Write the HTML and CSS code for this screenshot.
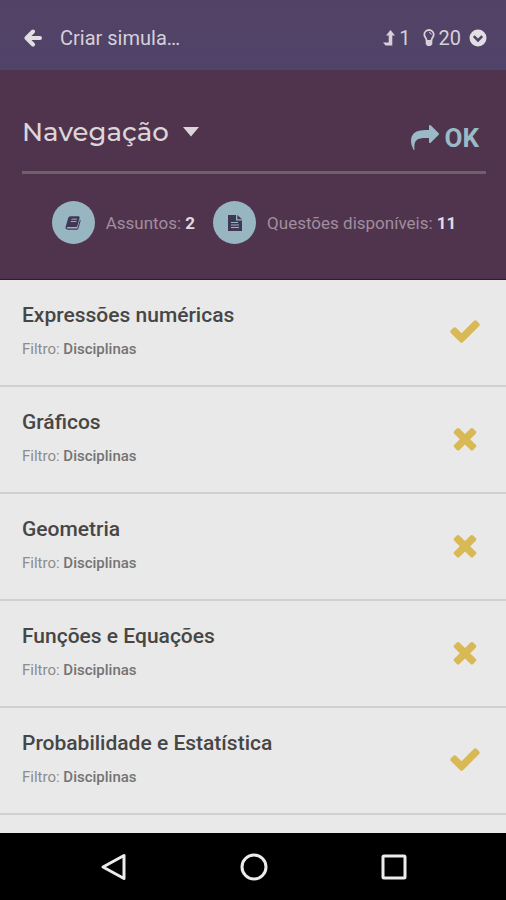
FILE: index.html
```html
<!DOCTYPE html>
<html lang="pt-BR">
<head>
<meta charset="utf-8">
<meta name="viewport" content="width=device-width, initial-scale=1">
<title>Criar simulado</title>
<link rel="stylesheet" href="styles.css">
</head>
<body>
<svg class="sprite" aria-hidden="true">
  <symbol id="check" viewBox="0 0 1792 1792"><path d="M1671 566q0 40-28 68l-724 724-136 136q-28 28-68 28t-68-28l-136-136-362-362q-28-28-28-68t28-68l136-136q28-28 68-28t68 28l294 295 656-657q28-28 68-28t68 28l136 136q28 28 28 68z"/></symbol>
  <symbol id="times" viewBox="0 0 1792 1792"><path d="M1490 1322q0 40-28 68l-136 136q-28 28-68 28t-68-28l-294-294-294 294q-28 28-68 28t-68-28l-136-136q-28-28-28-68t28-68l294-294-294-294q-28-28-28-68t28-68l136-136q28-28 68-28t68 28l294 294 294-294q28-28 68-28t68 28l136 136q28 28 28 68t-28 68l-294 294 294 294q28 28 28 68z"/></symbol>
</svg>

<header class="topbar">
  <button class="back" type="button" aria-label="Voltar">
    <svg viewBox="0 0 18 18" width="18" height="18"><path d="M9 2.500 2.500 9 9 15.500M3 9H16" fill="none" stroke="currentColor" stroke-width="4" stroke-linecap="round" stroke-linejoin="round"/></svg>
  </button>
  <h1 class="title">Criar simula…</h1>
  <div class="counters">
    <span class="counter">
      <svg viewBox="0 0 12 16" width="12" height="16"><path d="M7.500 0 12 5.500H9.300V15.500H2.600L0 12.500H5.700V5.500H3z" fill="currentColor"/></svg>1
    </span>
    <span class="counter">
      <svg viewBox="0 0 12 18" width="12" height="18"><path d="M3.600 11.500C3.600 9 1.300 8.500 1.300 5.500A4.700 4.500 0 0 1 10.700 5.500C10.700 8.500 8.400 9 8.400 11.500" fill="none" stroke="currentColor" stroke-width="1.800"/><path d="M6 3.500q2 0 2.300 2" fill="none" stroke="currentColor" stroke-width="1"/><path d="M2.700 11h6.600v4.200L7.500 17h-3l-1.800-1.800z" fill="currentColor"/></svg>20
    </span>
    <button class="more" type="button" aria-label="Mais">
      <svg viewBox="0 0 18 18" width="18" height="18"><circle cx="9" cy="9" r="8.500" fill="currentColor"/><path d="M4.800 7.200 9 11.400l4.200-4.200" fill="none" stroke="#514168" stroke-width="2.600"/></svg>
    </button>
  </div>
</header>

<section class="panel">
  <div class="panel-head">
    <button class="menu" type="button">Navegação
      <svg viewBox="0 0 16 10" width="16" height="10"><path d="M0 0h16L8 9.500z" fill="currentColor"/></svg>
    </button>
    <button class="ok" type="button">
      <svg viewBox="0 0 1792 1792" width="28" height="28"><path fill="currentColor" d="M1792 640q0 26-19 45l-512 512q-19 19-45 19t-45-19-19-45v-256h-224q-98 0-175.500 6t-154 21.500-133 42.500-105.500 69.500-80 101-48.500 138.500-17.500 181q0 55 5 123 0 6 2.500 23.500t2.500 26.500q0 15-8.500 25t-23.500 10q-16 0-28-17-7-9-13-22t-13.500-30-10.500-24q-127-285-127-451 0-199 53-333 162-403 875-403h224v-256q0-26 19-45t45-19 45 19l512 512q19 19 19 45z"/></svg>OK
    </button>
  </div>
  <div class="stats">
    <div class="stat">
      <span class="badge"><svg viewBox="0 0 18 18" width="16" height="16"><path d="M6 1.500H15.500q1.200.2.900 1.500L14 12.500q-.3 1-1.500 1H3q-1 0-1.200.8.200.9 1.400.9H14L16.800 5q1 .6.700 1.700L15 15.500q-.4 1.200-1.700 1.200H3Q.6 16.500.5 14.200L3.600 3.300Q4.300 1.500 6 1.500z" fill="currentColor"/><path d="M7.200 4.700h6.300M6.500 7.300h6.300" stroke="#98b5c2" stroke-width="1.100"/></svg></span>
      <span>Assuntos: <strong>2</strong></span>
    </div>
    <div class="stat">
      <span class="badge"><svg viewBox="0 0 16 18" width="16" height="18"><path d="M1 1h8v5.500h6V17H1z" fill="currentColor"/><path d="M10.300 1 15 5.300h-4.700z" fill="currentColor"/><path d="M4 8.500h7M4 11h8M4 13.500h8" stroke="#98b5c2" stroke-width="1.100"/></svg></span>
      <span>Questões disponíveis: <strong>11</strong></span>
    </div>
  </div>
</section>

<main class="list-area">
  <ul class="list">
    <li><button class="row" type="button" aria-pressed="true"><span class="text"><span class="name">Expressões numéricas</span><span class="filter">Filtro: <strong>Disciplinas</strong></span></span><svg class="mark"><use href="#check"/></svg></button></li>
    <li><button class="row" type="button" aria-pressed="false"><span class="text"><span class="name">Gráficos</span><span class="filter">Filtro: <strong>Disciplinas</strong></span></span><svg class="mark"><use href="#times"/></svg></button></li>
    <li><button class="row" type="button" aria-pressed="false"><span class="text"><span class="name">Geometria</span><span class="filter">Filtro: <strong>Disciplinas</strong></span></span><svg class="mark"><use href="#times"/></svg></button></li>
    <li><button class="row" type="button" aria-pressed="false"><span class="text"><span class="name">Funções e Equações</span><span class="filter">Filtro: <strong>Disciplinas</strong></span></span><svg class="mark"><use href="#times"/></svg></button></li>
    <li><button class="row" type="button" aria-pressed="true"><span class="text"><span class="name">Probabilidade e Estatística</span><span class="filter">Filtro: <strong>Disciplinas</strong></span></span><svg class="mark"><use href="#check"/></svg></button></li>
  </ul>
</main>

<nav class="system">
  <button type="button" aria-label="Voltar"><svg viewBox="0 0 28 28" width="28" height="28"><path d="M24 2.500v23L3 14z"/></svg></button>
  <button type="button" aria-label="Início"><svg viewBox="0 0 28 28" width="28" height="28"><circle cx="14" cy="14" r="12"/></svg></button>
  <button type="button" aria-label="Recentes"><svg viewBox="0 0 28 28" width="28" height="28"><rect x="3" y="3" width="22" height="22" rx="1"/></svg></button>
</nav>
</body>
</html>
```
FILE: styles.css
```css
* {
  box-sizing: border-box;
}

body {
  margin: 0;
  min-height: 100vh;
  display: flex;
  flex-direction: column;
  background: #e9e9e9;
  font-family: Roboto, "Liberation Sans", sans-serif;
}

button {
  padding: 0;
  border: 0;
  background: none;
  color: inherit;
  font: inherit;
  cursor: pointer;
}

svg {
  display: block;
  flex: none;
}

.sprite {
  position: absolute;
  width: 0;
  height: 0;
}

.topbar {
  display: flex;
  align-items: center;
  height: 70px;
  padding: 5px 19px 0 24px;
  background: linear-gradient(#534265, #504369);
  color: #d6d0d9;
  font-size: 20px;
}

.title {
  flex: 1;
  margin: 0 0 0 18px;
  font-size: 20px;
  font-weight: 400;
}

.back,
.more {
  color: #e2dfe2;
}

.counters,
.counter {
  display: flex;
  align-items: center;
}

.counters {
  gap: 8px;
}

.counter {
  gap: 4px;
}

.counter + .counter {
  margin-left: 4px;
}

.panel {
  height: 210px;
  padding: 0 20px 0 22px;
  background: #50344d;
  border-bottom: 1px solid #3b1240;
}

.panel-head {
  display: flex;
  align-items: center;
  justify-content: space-between;
  height: 104px;
  padding: 22px 7px 0 0;
  border-bottom: 3px solid #706169;
}

.menu {
  display: flex;
  align-items: center;
  gap: 14px;
  color: #dcd5da;
  font-family: Montserrat, Inter, sans-serif;
  font-size: 26px;
  font-weight: 500;
}

.ok {
  display: flex;
  align-items: center;
  gap: 6px;
  padding-top: 12px;
  color: #9bbac7;
  font-size: 26px;
  font-weight: 700;
}

.stats {
  display: flex;
  justify-content: center;
  gap: 18px;
  padding-top: 27px;
  color: #a08e9e;
  font-size: 17px;
  white-space: nowrap;
}

.stats strong {
  color: #e2dae0;
}

.stat {
  display: flex;
  align-items: center;
  gap: 11px;
}

.badge {
  display: grid;
  place-items: center;
  width: 43px;
  height: 43px;
  border-radius: 50%;
  background: #98b5c2;
  color: #403755;
}

.list-area {
  flex: 1;
}

.list {
  margin: 0;
  padding: 0;
  list-style: none;
}

.row {
  display: flex;
  align-items: center;
  justify-content: space-between;
  width: 100%;
  height: 107px;
  padding: 0 24px 3px 22px;
  border-bottom: 2px solid #d0d0d0;
  text-align: left;
}

.text {
  display: flex;
  flex-direction: column;
  gap: 12px;
}

.name {
  color: #464646;
  font-size: 21px;
  font-weight: 500;
  line-height: 24px;
}

.filter {
  color: #8c8c8c;
  font-size: 15px;
  line-height: 20px;
}

.filter strong {
  color: #747474;
  font-weight: 500;
}

.mark {
  width: 34px;
  height: 34px;
  fill: #d9b856;
}

.system {
  display: flex;
  align-items: center;
  justify-content: space-around;
  height: 67px;
  padding: 0 42px 0 44px;
  background: #000;
}

.system svg {
  fill: none;
  stroke: #ececec;
  stroke-width: 3;
  stroke-linejoin: round;
}
```
